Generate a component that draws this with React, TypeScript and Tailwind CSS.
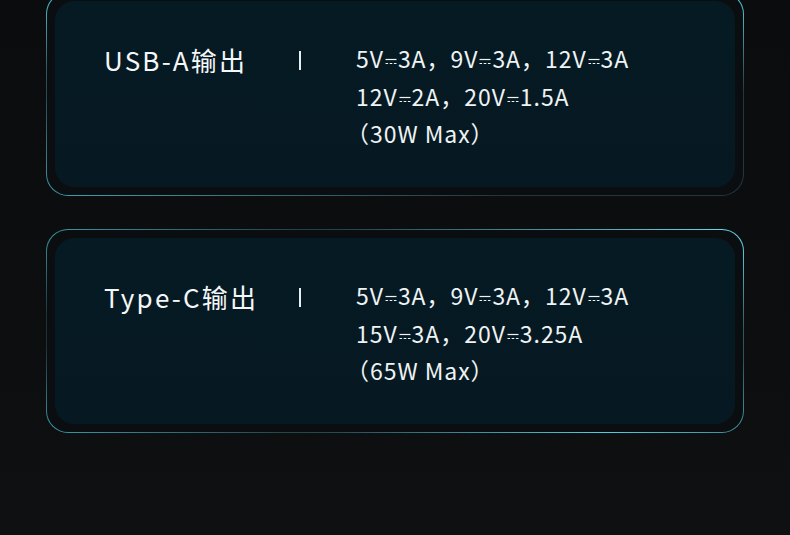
import React from 'react'

const font = { fontFamily: '"Noto Sans CJK SC", "Noto Sans", sans-serif' }

// DC symbol: solid bar over a dashed bar
const Dc: React.FC = () => (
  <svg width="12" height="7" viewBox="0 0 12 7" className="mx-[1px] inline-block align-middle" aria-hidden>
    <line x1="0.5" y1="1.5" x2="11.5" y2="1.5" stroke="currentColor" strokeWidth="1.2" />
    <line x1="0.5" y1="5.5" x2="11.5" y2="5.5" stroke="currentColor" strokeWidth="1.2" strokeDasharray="2.6 1.6" />
  </svg>
)

type Spec = { v: string, a: string }

const SpecLine: React.FC<{ items: Spec[] }> = ({ items }) => (
  <div>
    {items.map((it, i) => (
      <span key={i}>
        {it.v}
        <Dc />
        {it.a}
        {i < items.length - 1 && '，'}
      </span>
    ))}
  </div>
)

const Card: React.FC<{
  title: string
  lines: Spec[][]
  max: string
  border: string
  className?: string
}> = ({ title, lines, max, border, className }) => (
  <div className={`rounded-[22px] p-px ${border} ${className ?? ''}`}>
    <div className="rounded-[21px] bg-[#0b0e10] p-2">
      <div className="flex h-[186px] items-start rounded-[20px] bg-[linear-gradient(180deg,#061a23,#061922)] pl-[49px] pt-[39px]">
        <div className="flex w-[195px] items-center text-[26px] font-normal leading-[39px] tracking-[2.2px] text-[#f4f7f8]">
          {title}
        </div>
        <div className="mt-[11px] h-[19px] w-[2px] bg-[#e9eef0]" />
        <div className="ml-[55px] text-[23px] font-normal leading-[37.5px] tracking-[0.95px] text-[#eef3f4]">
          {lines.map((l, i) => <SpecLine key={i} items={l} />)}
          <div>
            <span className="-ml-[10px]">（</span>
            {max}
            ）
          </div>
        </div>
      </div>
    </div>
  </div>
)

export default function App() {
  return (
    <div
      className="h-[535px] w-[790px] overflow-hidden bg-[linear-gradient(180deg,#0b0c0d_0%,#0d0e0f_70%,#0f1011_100%)] px-[46px]"
      style={font}
    >
      <Card
        className="-mt-[8px]"
        title="USB-A输出"
        lines={[
          [{ v: '5V', a: '3A' }, { v: '9V', a: '3A' }, { v: '12V', a: '3A' }],
          [{ v: '12V', a: '2A' }, { v: '20V', a: '1.5A' }],
        ]}
        max="30W Max"
        border="bg-[#25353b] bg-[image:radial-gradient(ellipse_at_0%_0%,#4fc8da,transparent_35%),radial-gradient(ellipse_at_100%_0%,#58d4e6,transparent_35%),radial-gradient(ellipse_at_5%_100%,#3f9aa8,transparent_45%)]"
      />
      <Card
        className="mt-[33px]"
        title="Type-C输出"
        lines={[
          [{ v: '5V', a: '3A' }, { v: '9V', a: '3A' }, { v: '12V', a: '3A' }],
          [{ v: '15V', a: '3A' }, { v: '20V', a: '3.25A' }],
        ]}
        max="65W Max"
        border="bg-[#1f3238] bg-[image:radial-gradient(ellipse_at_100%_0%,#66e0f2,transparent_45%),radial-gradient(ellipse_at_80%_100%,#52cde0,transparent_40%),radial-gradient(ellipse_at_0%_0%,#3c99a8,transparent_30%),radial-gradient(ellipse_at_0%_100%,#3c99a8,transparent_30%)]"
      />
    </div>
  )
}
